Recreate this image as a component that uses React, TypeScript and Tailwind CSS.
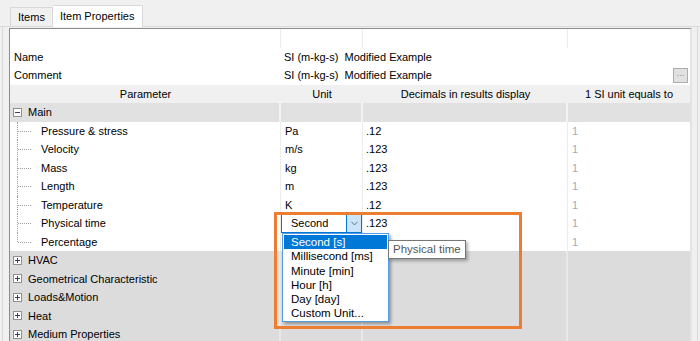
import { ChevronDown } from 'lucide-react';

const mainItems = [
    { name: 'Pressure & stress', unit: 'Pa', dec: '.12' },
    { name: 'Velocity', unit: 'm/s', dec: '.123' },
    { name: 'Mass', unit: 'kg', dec: '.123' },
    { name: 'Length', unit: 'm', dec: '.123' },
    { name: 'Temperature', unit: 'K', dec: '.12' },
    { name: 'Physical time', unit: '', dec: '.123', combo: true },
    { name: 'Percentage', unit: '', dec: '' },
];

const groups = ['HVAC', 'Geometrical Characteristic', 'Loads&Motion', 'Heat', 'Medium Properties'];

const options = ['Second [s]', 'Millisecond [ms]', 'Minute [min]', 'Hour [h]', 'Day [day]', 'Custom Unit...'];

const cols = 'grid grid-cols-[271px_82px_205px_122px]';

function Box({ open }: { open: boolean }) {
    return (
        <span className="relative w-[9px] h-[9px] border border-[#919191] bg-white flex items-center justify-center">
            <span className="absolute w-[5px] h-px bg-[#3c3c6c]" />
            {!open && <span className="absolute w-px h-[5px] bg-[#3c3c6c]" />}
        </span>
    );
}

export default function App() {
    return (
        <div
            className="relative w-[700px] h-[341px] overflow-hidden bg-[#f0f0f0] text-[11px] text-black"
            style={{ fontFamily: '"Liberation Sans", Arial, sans-serif' }}
        >
            {/* Tabs */}
            <div className="flex items-end h-[27px] pl-[10px] border-b border-[#d9d9d9]">
                <div className="h-[19px] px-[7px] flex items-center border border-b-0 border-[#d9d9d9] bg-[#f0f0f0]">
                    Items
                </div>
                <div className="h-[22px] px-[7px] flex items-center border border-b-0 border-l-0 border-[#d9d9d9] bg-white -mb-px">
                    Item Properties
                </div>
            </div>

            {/* Panel */}
            <div className="ml-[2px] mr-[2px] border-l border-r border-[#d9d9d9] h-[400px] pl-[6px] pr-[5px] pt-px">
                <div className="border-l border-t border-[#8c8c8c] border-r-2 border-r-[#e3e3e3] w-[683px]">
                    {/* empty row */}
                    <div className={`${cols} h-[18.5px] bg-white`}>
                        <div className="border-r border-[#ececec]" />
                        <div className="border-r border-[#ececec]" />
                        <div className="border-r border-[#ececec]" />
                        <div />
                    </div>
                    {['Name', 'Comment'].map((label) => (
                        <div key={label} className="flex h-[18.5px] bg-white items-center">
                            <div className="w-[271px] pl-[4px]">{label}</div>
                            <div className="flex-1 pl-[3px] whitespace-pre">SI (m-kg-s)  Modified Example</div>
                            {label === 'Comment' && (
                                <div className="w-[15px] h-[15px] mr-[2px] border border-[#adadad] bg-[#e1e1e1] text-[#888] text-[9px] leading-[9px] flex justify-center">
                                    ...
                                </div>
                            )}
                        </div>
                    ))}
                    {/* header */}
                    <div className={`${cols} h-[18.5px] bg-[#f0f0f0] items-center text-center`}>
                        <div>Parameter</div>
                        <div>Unit</div>
                        <div>Decimals in results display</div>
                        <div>1 SI unit equals to</div>
                    </div>
                    {/* Main group */}
                    <div className={`${cols} h-[18.5px] bg-[#e1e1e1] items-stretch`}>
                        <div className="flex items-center gap-[6px] pl-[3px] border-r-2 border-[#f3f3f3]">
                            <Box open />
                            <span>Main</span>
                        </div>
                        <div className="border-r-2 border-[#f3f3f3]" />
                        <div className="border-r-2 border-[#f3f3f3]" />
                        <div />
                    </div>
                    {mainItems.map((it, i) => (
                        <div key={it.name} className={`${cols} h-[18.5px] bg-white items-stretch`}>
                            <div className="relative flex items-center pl-[31px] border-r border-[#ececec]">
                                <span
                                    className={`absolute left-[7px] top-0 border-l border-dotted border-[#a0a0a0] ${i === mainItems.length - 1 ? 'h-[9px]' : 'h-full'}`}
                                />
                                <span className="absolute left-[8px] top-[9px] w-[13px] border-t border-dotted border-[#a0a0a0]" />
                                {it.name}
                            </div>
                            <div className="flex items-center pl-[4px] border-r border-[#ececec]">
                                {it.combo ? (
                                    <div className="flex w-[82px] h-[19px] -ml-[4px] border border-[#0078d7] bg-white items-center">
                                        <span className="flex-1 pl-[9px]">Second</span>
                                        <span className="w-[15px] h-full bg-[#cce4f7] border-l border-[#0078d7] flex items-center justify-center">
                                            <ChevronDown className="w-[11px] h-[11px] text-[#444]" strokeWidth={1.5} />
                                        </span>
                                    </div>
                                ) : (
                                    it.unit
                                )}
                            </div>
                            <div className="flex items-center pl-[3px] border-r border-[#ececec]">{it.dec}</div>
                            <div className="flex items-center pl-[4px] text-[#a8a8b8]">1</div>
                        </div>
                    ))}
                    {groups.map((g) => (
                        <div key={g} className={`${cols} h-[18.5px] bg-[#dcdcdc] items-stretch`}>
                            <div className="flex items-center gap-[6px] pl-[3px] border-r-2 border-[#e8e8e8]">
                                <Box open={false} />
                                <span>{g}</span>
                            </div>
                            <div className="border-r-2 border-[#e8e8e8]" />
                            <div className="border-r-2 border-[#e8e8e8]" />
                            <div />
                        </div>
                    ))}
                </div>
            </div>

            {/* Dropdown list */}
            <div className="absolute left-[282px] top-[233px] w-[107px] h-[89px] bg-white border border-[#569de5] shadow-[2px_2px_3px_rgba(0,0,0,0.35)] p-px">
                {options.map((o, i) => (
                    <div
                        key={o}
                        className={`h-[14.3px] leading-[14.3px] pl-[7px] text-[11.5px] ${i === 0 ? 'bg-[#0078d7] text-white' : 'text-black'}`}
                    >
                        {o}
                    </div>
                ))}
            </div>

            {/* Tooltip */}
            <div className="absolute left-[388px] top-[240px] h-[19px] px-[4px] bg-white border border-[#767676] text-[#575757] text-[11.5px] flex items-center shadow-[2px_2px_3px_rgba(0,0,0,0.3)]">
                Physical time
            </div>

            {/* Highlight annotation */}
            <div className="absolute left-[274px] top-[212px] w-[248px] h-[117px] border-[3px] border-[#ed7d31]" />
        </div>
    );
}
